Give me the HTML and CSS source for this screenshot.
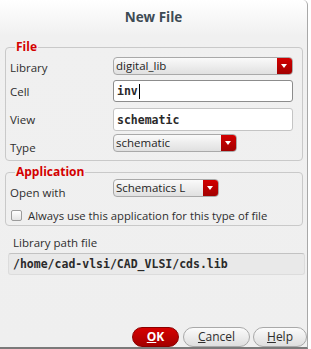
FILE: index.html
```html
<!DOCTYPE html>
<html lang="en">
<head>
<meta charset="UTF-8">
<title>New File</title>
<link rel="stylesheet" href="styles.css">
</head>
<body>

<div class="window">
    <div class="title-bar">New File</div>

    <fieldset class="group group-file">
        <legend>File</legend>
        <div class="form-row row-library">
            <span class="label">Library</span>
            <div class="combo combo-wide">
                <span class="combo-text">digital_lib</span>
                <span class="combo-arrow"></span>
            </div>
        </div>
        <div class="form-row row-cell">
            <span class="label">Cell</span>
            <div class="text-input focused"><span class="mono">inv</span><span class="caret"></span></div>
        </div>
        <div class="form-row row-view">
            <span class="label">View</span>
            <div class="text-input"><span class="mono">schematic</span></div>
        </div>
        <div class="form-row row-type">
            <span class="label">Type</span>
            <div class="combo combo-type">
                <span class="combo-text">schematic</span>
                <span class="combo-arrow"></span>
            </div>
        </div>
    </fieldset>

    <fieldset class="group group-app">
        <legend>Application</legend>
        <div class="form-row row-open">
            <span class="label">Open with</span>
            <div class="combo combo-app">
                <span class="combo-text">Schematics L</span>
                <span class="combo-arrow"></span>
            </div>
        </div>
        <label class="check-row">
            <span class="checkbox"></span>
            <span class="check-text">Always use this application for this type of file</span>
        </label>
    </fieldset>

    <div class="path-label">Library path file</div>
    <div class="path-field mono">/home/cad-vlsi/CAD_VLSI/cds.lib</div>

    <div class="button-bar">
        <div class="btn btn-ok"><u>O</u>K</div>
        <div class="btn btn-cancel"><u>C</u>ancel</div>
        <div class="btn btn-help"><u>H</u>elp</div>
    </div>
</div>

</body>
</html>
```

FILE: styles.css
```css
body {
    margin: 0;
    padding: 0;
    width: 311px;
    height: 349px;
    overflow: hidden;
    background-color: #ffffff;
    font-family: "Open Sans", "Noto Sans", sans-serif;
    font-size: 11.5px;
    color: #2e2e2e;
}
.window {
    position: relative;
    width: 307px;
    height: 347px;
    border-right: 1px solid #a8a8a8;
    border-bottom: 2px solid #7a7a7a;
    border-top-right-radius: 5px;
    background: linear-gradient(#ffffff 0px, #f0f0f0 36px, #efefef 100%);
    display: flex;
    flex-direction: column;
}
.title-bar {
    height: 36px;
    line-height: 34px;
    text-align: center;
    font-weight: bold;
    font-size: 13.5px;
    color: #3e4b54;
}
.group {
    margin: 5px 4px 0 5px;
    padding: 0 9px 8px 4px;
    border: 1px solid #c9c9c9;
    border-radius: 4px;
    min-width: 0;
}
.group legend {
    margin-left: 5px;
    padding: 0 1px;
    color: #d40000;
    font-weight: bold;
    font-size: 12px;
    line-height: 12px;
}
.group-app {
    padding-bottom: 4px;
}
.form-row {
    display: flex;
    align-items: center;
}
.label {
    width: 103px;
    flex-shrink: 0;
}
.row-library { height: 18px; margin-top: 4px; }
.row-library .label { margin-top: 3px; }
.row-cell { height: 22px; margin-top: 5px; }
.row-view { height: 23px; margin-top: 6px; }
.row-type { height: 18px; margin-top: 3px; }
.row-type .label { margin-top: 8px; }
.row-open { height: 18px; margin-top: 1px; }
.row-open .label { margin-top: 8px; }

.combo {
    display: flex;
    height: 18px;
    box-sizing: border-box;
    border: 1px solid #a9a9a9;
    border-radius: 4px;
    background: linear-gradient(#fafafa, #e0e0e0);
    overflow: hidden;
}
.combo-wide { flex: 1; }
.combo-type { width: 124px; }
.combo-app { width: 106px; }
.combo-text {
    flex: 1;
    padding-left: 2px;
    line-height: 16px;
    color: #1e1e1e;
}
.combo-arrow {
    width: 15px;
    position: relative;
    background: linear-gradient(#d20000, #a20000);
}
.combo-arrow::after {
    content: "";
    position: absolute;
    left: 4px;
    top: 6px;
    border-left: 3px solid transparent;
    border-right: 3px solid transparent;
    border-top: 4px solid #ffffff;
}
.text-input {
    flex: 1;
    height: 100%;
    box-sizing: border-box;
    border: 1px solid #c4c4c4;
    border-radius: 3px;
    background-color: #ffffff;
    display: flex;
    align-items: center;
    padding-left: 3px;
}
.text-input.focused {
    border-color: #8c8c8c;
}
.mono {
    font-family: "DejaVu Sans Mono", monospace;
    font-weight: bold;
    font-size: 11.5px;
    color: #2a2a2a;
}
.caret {
    width: 1px;
    height: 15px;
    background-color: #000000;
    margin-left: 1px;
}
.check-row {
    display: flex;
    align-items: center;
    gap: 6px;
    margin-top: 13px;
    margin-left: 1px;
    height: 11px;
}
.check-text {
    font-size: 11.3px;
}
.checkbox {
    width: 11px;
    height: 11px;
    box-sizing: border-box;
    border: 1px solid #9c9c9c;
    border-radius: 2px;
    background: linear-gradient(#ffffff, #e4e4e4);
}
.path-label {
    margin: 9px 0 0 13px;
    line-height: 16px;
}
.path-field {
    margin: 2px 2px 0 8px;
    height: 22px;
    line-height: 21px;
    box-sizing: border-box;
    border: 1px solid #dcdcdc;
    border-top-color: #c2c2c2;
    border-radius: 3px;
    background-color: #e9e9e9;
    padding-left: 4px;
}
.button-bar {
    margin-top: auto;
    display: flex;
    justify-content: flex-end;
    gap: 3px;
}
.btn {
    height: 20px;
    box-sizing: border-box;
    border-radius: 10px;
    text-align: center;
    line-height: 18px;
    font-size: 12px;
}
.btn-ok {
    width: 47px;
    margin-right: 1px;
    background: linear-gradient(#d60000, #a40000);
    border: 1px solid #8a0000;
    color: #ffffff;
    font-weight: bold;
}
.btn-cancel, .btn-help {
    border: 1px solid #a9a9a9;
    background: linear-gradient(#fbfbfb, #dedede);
    color: #2e2e2e;
}
.btn-cancel { width: 67px; }
.btn-help { width: 54px; }
```
